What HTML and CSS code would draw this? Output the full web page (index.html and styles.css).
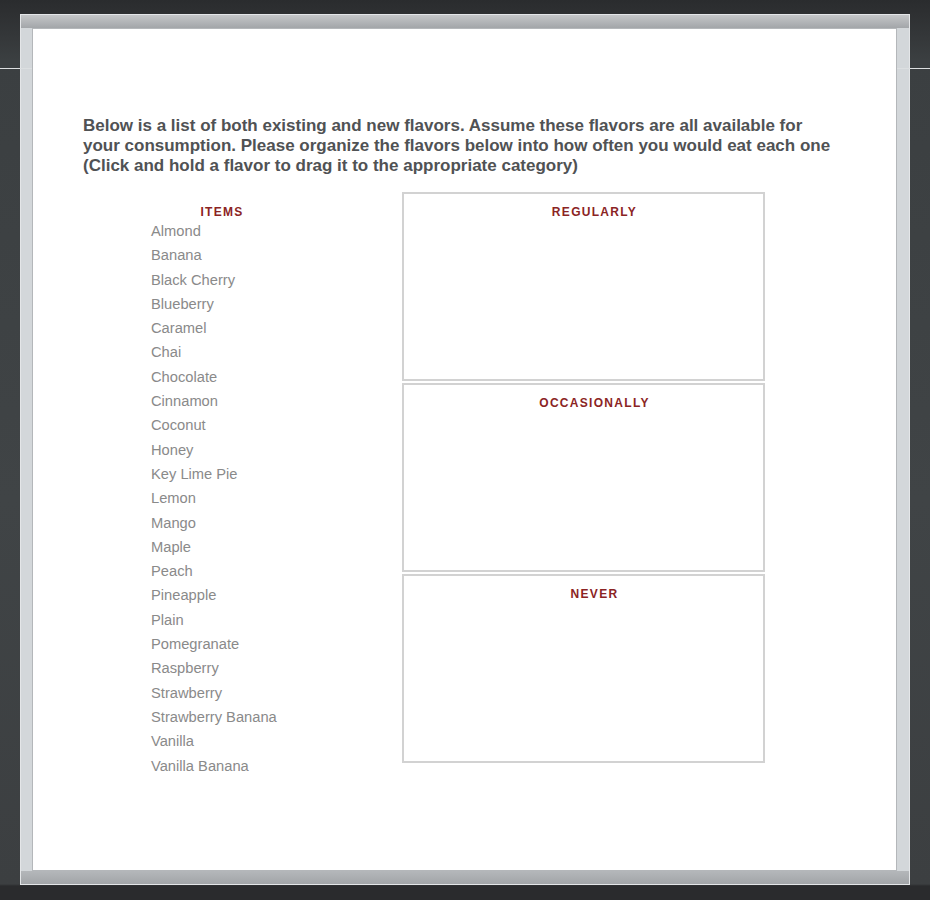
FILE: index.html
```html
<!DOCTYPE html>
<html lang="en">

<head>
    <meta charset="UTF-8">
    <meta name="viewport" content="width=device-width, initial-scale=1.0">
    <title>Flavor Survey</title>
    <link rel="stylesheet" href="styles.css">
</head>

<body>
    <div class="guide"></div>
    <div class="frame">
        <div class="panel">
            <p class="question">Below is a list of both existing and new flavors. Assume these flavors are all available for your consumption. Please organize the flavors below into how often you would eat each one (Click and hold a flavor to drag it to the appropriate category)</p>
            <div class="sorter">
                <div class="items">
                    <div class="label">ITEMS</div>
                    <ul class="item-list">
                        <li>Almond</li>
                        <li>Banana</li>
                        <li>Black Cherry</li>
                        <li>Blueberry</li>
                        <li>Caramel</li>
                        <li>Chai</li>
                        <li>Chocolate</li>
                        <li>Cinnamon</li>
                        <li>Coconut</li>
                        <li>Honey</li>
                        <li>Key Lime Pie</li>
                        <li>Lemon</li>
                        <li>Mango</li>
                        <li>Maple</li>
                        <li>Peach</li>
                        <li>Pineapple</li>
                        <li>Plain</li>
                        <li>Pomegranate</li>
                        <li>Raspberry</li>
                        <li>Strawberry</li>
                        <li>Strawberry Banana</li>
                        <li>Vanilla</li>
                        <li>Vanilla Banana</li>
                    </ul>
                </div>
                <div class="bins">
                    <div class="bin">
                        <div class="label">REGULARLY</div>
                    </div>
                    <div class="bin">
                        <div class="label">OCCASIONALLY</div>
                    </div>
                    <div class="bin">
                        <div class="label">NEVER</div>
                    </div>
                </div>
            </div>
        </div>
    </div>
</body>

</html>
```

FILE: styles.css
```css
body {
    margin: 0;
    height: 900px;
    font-family: "Liberation Sans", Arial, sans-serif;
    background: linear-gradient(to bottom, #2a2c2e 0, #2e3032 14px, #3b3f41 60px, #404446 500px, #3c3f41 884px, #2a2b2d 886px, #2a2b2d 100%);
    overflow: hidden;
}

/* thin light line crossing the frame */
.guide {
    position: absolute;
    left: 0;
    right: 0;
    top: 68px;
    height: 1px;
    background-color: #dcdfe1;
    z-index: 1;
}

.frame {
    position: relative;
    margin: 14px 0 0 20px;
    width: 865px;
    height: 843px;
    padding: 13px 12px 13px 11px;
    border: 1px solid #e4e6e8;
    background:
        linear-gradient(to bottom, #c4c6c8, #a3a6a9) top / 100% 13px no-repeat,
        linear-gradient(to bottom, #b4b7ba, #a2a5a8) bottom / 100% 13px no-repeat,
        #d3d7da;
}

.panel {
    position: relative;
    z-index: 2;
    box-sizing: border-box;
    height: 843px;
    padding: 87px 0 0 50px;
    background-color: #fff;
    border: 1px solid #b4b7ba;
}

.question {
    margin: 0;
    width: 755px;
    font-size: 17px;
    line-height: 20px;
    font-weight: bold;
    color: #505254;
}

.sorter {
    display: flex;
    margin-top: 16px;
}

.label {
    font-size: 12px;
    line-height: 14px;
    font-weight: bold;
    letter-spacing: 1.3px;
    color: #8b2424;
    text-align: center;
}

.items {
    width: 142px;
    margin-left: 68px;
    padding-top: 13px;
}

.item-list {
    list-style: none;
    margin: 0;
    padding: 0;
}

.item-list li {
    font-size: 14.7px;
    line-height: 24.3px;
    color: #8a8a8a;
    cursor: move;
}

.bins {
    margin-left: 109px;
    width: 363px;
}

.bin {
    box-sizing: border-box;
    height: 189px;
    margin-bottom: 2px;
    padding: 11px 0 0 22px;
    border: 2px solid #d2d2d2;
}
```
